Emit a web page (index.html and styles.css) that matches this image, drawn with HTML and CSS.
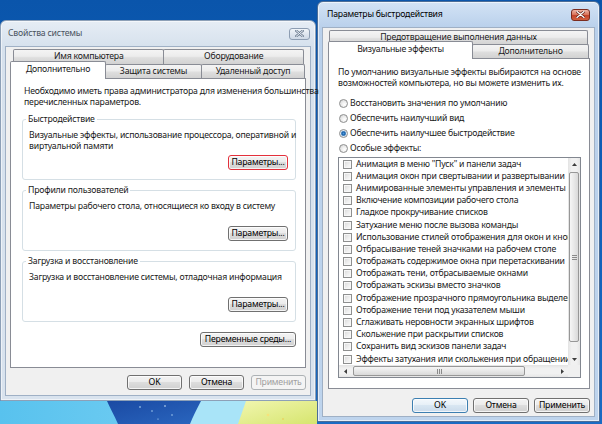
FILE: index.html
```html
<!DOCTYPE html>
<html lang="ru">
<head>
<meta charset="utf-8">
<title>Свойства системы</title>
<link rel="stylesheet" href="styles.css">
</head>
<body>
<div class="desktop">
  <div class="wallpaper">
    <svg width="317" height="23" viewBox="0 0 317 23">
      <defs>
        <linearGradient id="sky" x1="0" y1="0" x2="1" y2="0">
          <stop offset="0" stop-color="#58c2ee"/>
          <stop offset="1" stop-color="#86d6f5"/>
        </linearGradient>
        <linearGradient id="swoosh" x1="0" y1="0" x2="1" y2="1">
          <stop offset="0" stop-color="#1a4aa3"/>
          <stop offset="1" stop-color="#2a66bf"/>
        </linearGradient>
        <linearGradient id="grass" x1="0" y1="0" x2="1" y2="1">
          <stop offset="0" stop-color="#f1f6b0"/>
          <stop offset="1" stop-color="#d6e56e"/>
        </linearGradient>
      </defs>
      <rect width="317" height="23" fill="url(#sky)"/>
      <path d="M196 0 L250 0 L240 23 L186 23 Z" fill="#a9e4f8"/>
      <path d="M107 0 L201 0 C197 8 193 15 190 23 L118 23 C114 14 110 7 107 0 Z" fill="url(#swoosh)"/>
      <path d="M246 0 L317 0 L317 23 L238 23 Z" fill="url(#grass)"/>
      <circle cx="140" cy="6" r="0.8" fill="#bfe6ff"/>
      <circle cx="152" cy="10" r="0.7" fill="#bfe6ff"/>
      <circle cx="165" cy="5" r="0.8" fill="#d7f0ff"/>
      <circle cx="172" cy="14" r="0.7" fill="#bfe6ff"/>
      <circle cx="158" cy="18" r="0.6" fill="#bfe6ff"/>
      <circle cx="268" cy="14" r="1.3" fill="#f7e27a"/>
      <circle cx="283" cy="18" r="1" fill="#e9d462"/>
    </svg>
  </div>

  <section class="win win-sys">
    <header class="titlebar">
      <span class="title">Свойства системы</span>
      <span class="close close-inactive">
        <svg width="9" height="7" viewBox="0 0 9 7"><path d="M1 0.5 L8 6.5 M8 0.5 L1 6.5" stroke="#6f7f93" stroke-width="2.4" stroke-linecap="round"/><path d="M1 0.5 L8 6.5 M8 0.5 L1 6.5" stroke="#eef2f7" stroke-width="1" stroke-linecap="round"/></svg>
      </span>
    </header>
    <div class="client">
      <div class="tabrow back">
        <div class="tab t-name">Имя компьютера</div>
        <div class="tab t-hw">Оборудование</div>
      </div>
      <div class="tabrow front">
        <div class="tab sel t-adv">Дополнительно</div>
        <div class="tab t-prot">Защита системы</div>
        <div class="tab t-remote">Удаленный доступ</div>
      </div>
      <div class="panel panel-sys">
        <p class="intro">Необходимо иметь права администратора для изменения большинства<br>перечисленных параметров.</p>
        <fieldset class="group">
          <legend>Быстродействие</legend>
          <p class="gtext">Визуальные эффекты, использование процессора, оперативной и<br>виртуальной памяти</p>
          <div class="gbtns"><button class="btn btn-params marked">Параметры...</button></div>
        </fieldset>
        <fieldset class="group">
          <legend>Профили пользователей</legend>
          <p class="gtext">Параметры рабочего стола, относящиеся ко входу в систему</p>
          <div class="gbtns"><button class="btn btn-params">Параметры...</button></div>
        </fieldset>
        <fieldset class="group">
          <legend>Загрузка и восстановление</legend>
          <p class="gtext">Загрузка и восстановление системы, отладочная информация</p>
          <div class="gbtns"><button class="btn btn-params">Параметры...</button></div>
        </fieldset>
        <div class="envrow"><button class="btn btn-env">Переменные среды...</button></div>
      </div>
      <div class="btnrow">
        <button class="btn btn-dlg">OK</button>
        <button class="btn btn-dlg">Отмена</button>
        <button class="btn btn-dlg" disabled>Применить</button>
      </div>
    </div>
  </section>

  <section class="win win-perf">
    <header class="titlebar">
      <span class="title">Параметры быстродействия</span>
      <span class="close close-active">
        <svg width="9" height="7" viewBox="0 0 9 7"><path d="M1 0.5 L8 6.5 M8 0.5 L1 6.5" stroke="#5a1b12" stroke-width="2.6" stroke-linecap="round"/><path d="M1 0.5 L8 6.5 M8 0.5 L1 6.5" stroke="#ffffff" stroke-width="1.3" stroke-linecap="round"/></svg>
      </span>
    </header>
    <div class="client">
      <div class="tabrow back">
        <div class="tab t-dep">Предотвращение выполнения данных</div>
      </div>
      <div class="tabrow front">
        <div class="tab sel t-vis">Визуальные эффекты</div>
        <div class="tab t-more">Дополнительно</div>
      </div>
      <div class="panel panel-perf">
        <p class="intro">По умолчанию визуальные эффекты выбираются на основе<br>возможностей компьютера, но вы можете изменить их.</p>
        <div class="radios">
          <div class="radio-row"><span class="radio"></span>Восстановить значения по умолчанию</div>
          <div class="radio-row"><span class="radio"></span>Обеспечить наилучший вид</div>
          <div class="radio-row"><span class="radio on"></span>Обеспечить наилучшее быстродействие</div>
          <div class="radio-row"><span class="radio"></span>Особые эффекты:</div>
        </div>
        <div class="listbox">
          <div class="items">
            <div class="item"><span class="check"></span>Анимация в меню "Пуск" и панели задач</div>
            <div class="item"><span class="check"></span>Анимация окон при свертывании и развертывании</div>
            <div class="item"><span class="check"></span>Анимированные элементы управления и элементы внутри окна</div>
            <div class="item"><span class="check"></span>Включение композиции рабочего стола</div>
            <div class="item"><span class="check"></span>Гладкое прокручивание списков</div>
            <div class="item"><span class="check"></span>Затухание меню после вызова команды</div>
            <div class="item"><span class="check"></span>Использование стилей отображения для окон и кнопок</div>
            <div class="item"><span class="check"></span>Отбрасывание теней значками на рабочем столе</div>
            <div class="item"><span class="check"></span>Отображать содержимое окна при перетаскивании</div>
            <div class="item"><span class="check"></span>Отображать тени, отбрасываемые окнами</div>
            <div class="item"><span class="check"></span>Отображать эскизы вместо значков</div>
            <div class="item"><span class="check"></span>Отображение прозрачного прямоугольника выделения</div>
            <div class="item"><span class="check"></span>Отображение тени под указателем мыши</div>
            <div class="item"><span class="check"></span>Сглаживать неровности экранных шрифтов</div>
            <div class="item"><span class="check"></span>Скольжение при раскрытии списков</div>
            <div class="item"><span class="check"></span>Сохранить вид эскизов панели задач</div>
            <div class="item"><span class="check"></span>Эффекты затухания или скольжения при обращении к меню</div>
          </div>
          <div class="vscroll">
            <div class="sb-btn"><svg width="5" height="3" viewBox="0 0 5 3"><path d="M0 3 L2.5 0 L5 3 Z" fill="#3d3d3d"/></svg></div>
            <div class="vthumb"><span class="grip-h"></span><span class="grip-h"></span><span class="grip-h"></span></div>
            <div class="sb-space"></div>
            <div class="sb-btn"><svg width="5" height="3" viewBox="0 0 5 3"><path d="M0 0 L2.5 3 L5 0 Z" fill="#3d3d3d"/></svg></div>
          </div>
          <div class="hscroll">
            <div class="sb-btn"><svg width="3" height="5" viewBox="0 0 3 5"><path d="M3 0 L0 2.5 L3 5 Z" fill="#3d3d3d"/></svg></div>
            <div class="hthumb"><span class="grip-v"></span><span class="grip-v"></span><span class="grip-v"></span></div>
            <div class="sb-space"></div>
            <div class="sb-btn"><svg width="3" height="5" viewBox="0 0 3 5"><path d="M0 0 L3 2.5 L0 5 Z" fill="#3d3d3d"/></svg></div>
          </div>
          <div class="corner"></div>
        </div>
      </div>
      <div class="btnrow">
        <button class="btn btn-dlg2 default">OK</button>
        <button class="btn btn-dlg2">Отмена</button>
        <button class="btn btn-dlg2">Применить</button>
      </div>
    </div>
  </section>
</div>
</body>
</html>
```
FILE: styles.css
```css
* { box-sizing: border-box; margin: 0; padding: 0; }
html, body { width: 602px; height: 424px; overflow: hidden; }
body {
  font-family: "Noto Sans", "Open Sans", "DejaVu Sans", sans-serif;
  font-size: 8.7px;
  letter-spacing: -0.2px;
  line-height: 11px;
  color: #1a1a1a;
  background: #0d5cb3;
}

.desktop {
  position: relative;
  width: 602px;
  height: 424px;
  background: linear-gradient(180deg, #0a55ab 0%, #0f5eb7 40%, #1a6bc3 100%);
}
.wallpaper { position: absolute; left: 0; top: 401px; width: 317px; height: 23px; }
.wallpaper svg { display: block; }

/* windows */
.win {
  position: absolute;
  display: flex;
  flex-direction: column;
  border: 1px solid;
  border-radius: 6px 6px 0 0;
  padding: 0 4px 4px;
}
.win-sys {
  left: 0; top: 20px; width: 316px; height: 381px;
  border-color: #8da0b7;
  background: linear-gradient(180deg, #e6edf5 0, #d6e1ed 26px, #d9e3ee 100%);
  box-shadow: inset 0 0 0 1px rgba(255,255,255,.55);
}
.win-perf {
  left: 317px; top: 1px; width: 283px; height: 421px;
  border-color: #4c6d96;
  background: linear-gradient(180deg, #d3e3f5 0, #b9d0eb 26px, #bed4ed 100%);
  box-shadow: inset 0 0 0 1px rgba(255,255,255,.6);
}

.titlebar {
  flex: none;
  height: 25px;
  display: flex;
  align-items: center;
  justify-content: space-between;
}
.win-sys .titlebar { padding: 0 1px 0 3px; }
.win-perf .titlebar { padding: 0 5px 0 5px; }
.title { white-space: nowrap; }
.win-sys .title { color: #4a535e; }
.win-perf .title { color: #000; }

.close {
  display: flex;
  align-items: center;
  justify-content: center;
  width: 21px;
  height: 12px;
  border: 1px solid;
  border-radius: 3px;
}
.close svg { display: block; }
.close-inactive {
  border-color: #8d9db2;
  background: linear-gradient(180deg, #f1f5f9 0, #dfe6ef 50%, #cfd9e6 100%);
}
.close-active {
  width: 19px;
  border-color: #7b2c1f;
  background: linear-gradient(180deg, #efb5a6 0, #d9765d 45%, #c5452c 55%, #d1603f 100%);
}

/* client area */
.client {
  flex: 1;
  display: flex;
  flex-direction: column;
  background: #f0f0f0;
  border: 1px solid #9fb0c5;
}
.win-sys .client { padding: 2px 4px 0; }
.win-perf .client { padding: 2px 4px 0 5px; }

/* tabs */
.tabrow { display: flex; flex: none; }
.tabrow.back { height: 15px; }
.win-perf .tabrow.back { height: 14px; }
.tabrow.front {
  height: 17px;
  margin-top: -3px;
  align-items: flex-end;
  position: relative;
  z-index: 2;
}
.tab {
  display: flex;
  align-items: center;
  justify-content: center;
  white-space: nowrap;
  height: 15px;
  padding-bottom: 2px;
  border: 1px solid #898c95;
  border-bottom: none;
  border-radius: 2px 2px 0 0;
  background: linear-gradient(180deg, #f4f4f4 0, #ececec 45%, #dedede 55%, #d2d2d2 100%);
}
.tab + .tab { margin-left: -1px; }
.front .tab { height: 14px; padding-bottom: 0; }
.front .tab.sel {
  height: 18px;
  margin-bottom: -1px;
  padding-bottom: 3px;
  background: #fff;
}

.win-sys .tabrow.back { padding: 0 2px 0 3px; }
.t-name { width: 152px; }
.t-hw { width: 141px; }
.t-adv { width: 96px; }
.t-prot { width: 97px; }
.t-remote { width: 104px; }

.win-perf .tabrow.back { padding: 0 2px 0 1px; }
.t-dep { width: 259px; }
.t-vis { width: 145px; }
.t-more { width: 117px; }

/* panels */
.panel {
  flex: none;
  position: relative;
  z-index: 1;
  background: #fff;
  border: 1px solid #898c95;
}
.panel-sys { height: 290px; padding: 7px 9px 0 11px; }
.panel-perf { height: 331px; padding: 8px 0 0 9px; }
.intro { white-space: nowrap; }
.panel-sys .intro { margin-left: 2px; }

.group {
  min-width: 0;
  border: 1px solid #d5dfe5;
  border-radius: 3px;
  padding: 5px 7px 9px 6px;
  margin-top: 6px;
}
.group + .group { margin-top: 5px; }
.group legend { padding: 0 2px; margin-left: -3px; line-height: 11px; }
.gtext { height: 25px; white-space: nowrap; }
.gbtns { display: flex; justify-content: flex-end; }
.envrow { display: flex; justify-content: flex-end; margin-top: 10px; }

/* buttons */
.btn {
  font: inherit;
  letter-spacing: inherit;
  line-height: 13px;
  height: 15px;
  padding: 0;
  color: #000;
  text-align: center;
  border: 1px solid #707070;
  border-radius: 3px;
  background: linear-gradient(180deg, #f3f3f3 0, #ebebeb 49%, #dddddd 50%, #d0d0d0 100%);
  box-shadow: inset 0 0 0 1px rgba(255,255,255,.75);
}
.btn-params { width: 60px; }
.btn-env { width: 96px; }
.btn-dlg { width: 55px; }
.btn-dlg2 { width: 56px; }
.btn.marked { border-color: #e3303b; }
.btn:disabled {
  color: #a0a0a0;
  border-color: #adb2b5;
  background: #f4f4f4;
  box-shadow: none;
}
.btn.default {
  border-color: #3c7fb1;
  background: linear-gradient(180deg, #f3f8fc 0, #e6eff7 49%, #d8e6f2 50%, #cadbeb 100%);
}

.btnrow { flex: none; display: flex; justify-content: flex-end; }
.win-sys .btnrow { margin-top: 7px; gap: 7px; }
.win-perf .btnrow { margin-top: 9px; gap: 5px; }

/* radios */
.radios { margin-top: 7px; }
.radio-row {
  height: 15px;
  display: flex;
  align-items: center;
  gap: 2px;
  white-space: nowrap;
}
.radio {
  flex: none;
  width: 9px;
  height: 9px;
  margin-left: 1px;
  border-radius: 50%;
  border: 1px solid #8e8f8f;
  background: radial-gradient(circle at 65% 65%, #ffffff 0, #efefef 40%, #cdcdcd 100%);
}
.radio.on {
  background: radial-gradient(circle, #4a9be0 0, #1b5fa6 1.6px, #6fa3d3 2.4px, #dfe9f3 3px, #e8e8e8 100%);
}

/* list box */
.listbox {
  margin-top: 1px;
  width: 243px;
  height: 221px;
  border: 1px solid #828790;
  background: #fff;
  display: grid;
  grid-template-columns: 1fr 12px;
  grid-template-rows: 1fr 12px;
}
.items { overflow: hidden; min-width: 0; }
.item {
  height: 12.2px;
  display: flex;
  align-items: center;
  gap: 4px;
  padding-left: 4px;
  white-space: nowrap;
}
.check {
  flex: none;
  width: 9px;
  height: 9px;
  border: 1px solid #8e8f8f;
  background: linear-gradient(135deg, #d8d8d8 0, #f0f0f0 60%, #fbfbfb 100%);
  box-shadow: inset 0 0 0 1px #f7f7f7;
}

.vscroll {
  display: flex;
  flex-direction: column;
  background: linear-gradient(90deg, #e3e3e3 0, #f1f1f1 30%, #f1f1f1 70%, #e6e6e6 100%);
}
.hscroll {
  display: flex;
  background: linear-gradient(180deg, #e3e3e3 0, #f1f1f1 30%, #f1f1f1 70%, #e6e6e6 100%);
}
.sb-btn {
  flex: none;
  width: 12px;
  height: 12px;
  display: flex;
  align-items: center;
  justify-content: center;
}
.sb-btn svg { display: block; }
.sb-space { flex: 1; }
.vthumb {
  flex: none;
  height: 170px;
  margin: 2px 0 0 1px;
  width: 10px;
  border: 1px solid #979797;
  border-radius: 2px;
  background: linear-gradient(90deg, #f6f6f6 0, #e8e8e8 50%, #d9d9d9 100%);
  display: flex;
  flex-direction: column;
  align-items: center;
  justify-content: center;
  gap: 1px;
}
.grip-h { width: 5px; height: 1px; background: #8a8a8a; }
.hthumb {
  flex: none;
  width: 172px;
  height: 10px;
  margin: 1px 0 0 2px;
  border: 1px solid #979797;
  border-radius: 2px;
  background: linear-gradient(180deg, #f6f6f6 0, #e8e8e8 50%, #d9d9d9 100%);
  display: flex;
  align-items: center;
  justify-content: center;
  gap: 1px;
}
.grip-v { width: 1px; height: 5px; background: #8a8a8a; }
.corner { background: #f0f0f0; }
```
